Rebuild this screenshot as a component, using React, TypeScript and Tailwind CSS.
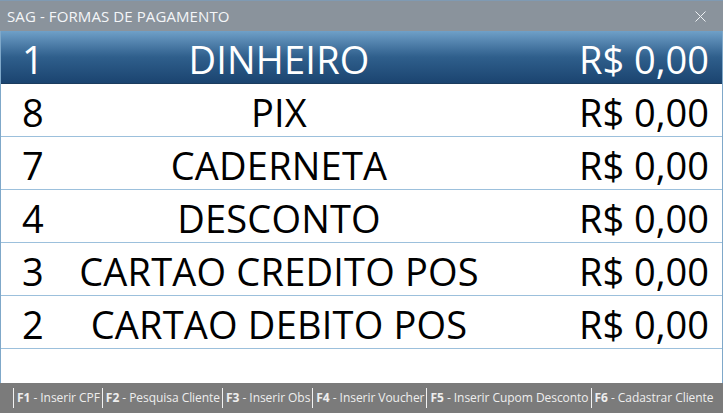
import React from "react";

const rows = [
  { n: "1", name: "DINHEIRO", v: "R$ 0,00" },
  { n: "8", name: "PIX", v: "R$ 0,00" },
  { n: "7", name: "CADERNETA", v: "R$ 0,00" },
  { n: "4", name: "DESCONTO", v: "R$ 0,00" },
  { n: "3", name: "CARTAO CREDITO POS", v: "R$ 0,00" },
  { n: "2", name: "CARTAO DEBITO POS", v: "R$ 0,00" },
];

const keys = [
  ["F1", "Inserir CPF"],
  ["F2", "Pesquisa Cliente"],
  ["F3", "Inserir Obs"],
  ["F4", "Inserir Voucher"],
  ["F5", "Inserir Cupom Desconto"],
  ["F6", "Cadastrar Cliente"],
];

export default function App() {
  return (
    <div
      className="w-[723px] h-[413px] flex flex-col bg-white overflow-hidden"
      style={{ fontFamily: '"Open Sans", "Noto Sans", sans-serif' }}
    >
      <div className="h-[31px] shrink-0 bg-[#8a939c] border-t border-[#7f9ab3] flex items-center justify-between pl-[7px] pr-[17px]">
        <span className="text-[15px] text-[#f4f6f8] tracking-[0.1px]">SAG - FORMAS DE PAGAMENTO</span>
        <svg width="11" height="11" viewBox="0 0 11 11" className="text-[#eef1f4]">
          <path d="M0.5 0.5 L10.5 10.5 M10.5 0.5 L0.5 10.5" stroke="currentColor" strokeWidth="1" />
        </svg>
      </div>
      <div className="flex-1 flex flex-col border-x border-[#7fa8c9]">
        {rows.map((r, i) => (
          <div
            key={r.n}
            className={
              i === 0
                ? "h-[53px] shrink-0 flex items-center pt-[3px] bg-gradient-to-b from-[#6fa0c8] via-[#2f5f8c] to-[#1b4470] text-white border-b border-[#1b3c5e]"
                : "h-[53px] shrink-0 flex items-center pt-[3px] text-black border-b border-[#9cc0dc]"
            }
          >
            <div className="w-[59px] pl-[21px] text-[38px] leading-none">{r.n}</div>
            <div className="w-[438px] text-center text-[38px] leading-none tracking-[0.2px]">{r.name}</div>
            <div className="flex-1 text-right pr-[13px] text-[38px] leading-none">{r.v}</div>
          </div>
        ))}
        <div className="flex-1" />
      </div>
      <div className="h-[30px] shrink-0 bg-[#7b7b7b] flex items-center pl-[13px] text-[12px] tracking-[-0.05px] text-[#eeeeee] whitespace-nowrap">
        {keys.map(([k, t]) => (
          <div key={k} className="shrink-0 flex items-center h-[20px] border-l border-[#f2f2f2] pl-[3px] pr-[2px] whitespace-nowrap">
            <b className="font-bold">{k}</b>
            <span>&nbsp;- {t}</span>
          </div>
        ))}
      </div>
    </div>
  );
}
